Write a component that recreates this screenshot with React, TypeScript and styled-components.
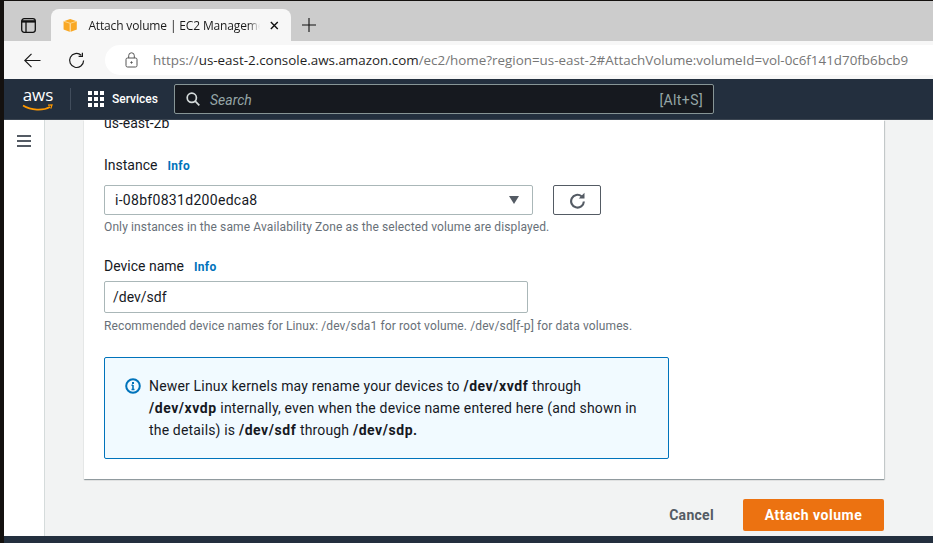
import React from 'react';
import styled, { createGlobalStyle } from 'styled-components';

const GlobalStyle = createGlobalStyle`
  html, body {
    margin: 0;
    padding: 0;
    height: 100%;
    overflow: hidden;
    background: #111;
  }
  * { box-sizing: border-box; }
`;

const Screen = styled.div`
  width: 933px;
  height: 543px;
  padding: 1px 0 0 4px;
  background: #14110f;
  display: flex;
  flex-direction: column;
  overflow: hidden;
  font-family: Roboto, "Noto Sans", sans-serif;
`;

const TabStrip = styled.div`
  height: 40px;
  flex: none;
  background: #cccccc;
  display: flex;
  align-items: flex-end;
  padding-left: 17px;
  color: #111;
`;

const SidebarIcon = styled.svg`
  width: 15px;
  height: 15px;
  margin-bottom: 8px;
  margin-right: 15px;
`;

const Tab = styled.div`
  width: 240px;
  height: 32px;
  background: #f7f7f7;
  border-radius: 8px 8px 0 0;
  display: flex;
  align-items: center;
  padding: 0 12px;
  margin-right: 11px;
`;

const TabTitle = styled.span`
  font-family: "Open Sans", sans-serif;
  font-size: 12px;
  letter-spacing: -0.15px;
  color: #1a1a1a;
  width: 172px;
  margin-left: 11px;
  margin-right: 10px;
  flex: none;
  white-space: nowrap;
  overflow: hidden;
  -webkit-mask-image: linear-gradient(to right, #000 160px, transparent 172px);
  mask-image: linear-gradient(to right, #000 160px, transparent 172px);
`;

const NewTabIcon = styled.svg`
  width: 14px;
  height: 14px;
  margin-bottom: 9px;
`;

const Toolbar = styled.div`
  height: 38px;
  flex: none;
  background: #f7f7f7;
  display: flex;
  align-items: center;
  padding-left: 20px;
`;

const ToolIcon = styled.svg<{ $gap: number }>`
  width: 17px;
  height: 17px;
  margin-right: ${(p) => p.$gap}px;
  flex: none;
`;

const AddressBar = styled.div`
  flex: 1;
  height: 30px;
  background: #ffffff;
  border-radius: 15px 0 0 15px;
  display: flex;
  align-items: center;
  padding-left: 20px;
  font-family: "Open Sans", sans-serif;
  font-size: 13.4px;
  color: #767676;
  white-space: nowrap;
`;

const Host = styled.span`
  color: #1f1f1f;
`;

const LockIcon = styled.svg`
  width: 13px;
  height: 16px;
  margin-right: 15px;
  flex: none;
`;

const NavBar = styled.div`
  height: 41px;
  flex: none;
  background: #232f3e;
  display: flex;
  align-items: center;
  padding-left: 18px;
  border-bottom: 1px solid #3c4652;
`;

const AwsLogo = styled.div`
  width: 32px;
  height: 28px;
  position: relative;
  color: #fff;
  font-family: "Open Sans", sans-serif;
  font-size: 17px;
  line-height: 20px;
  text-align: center;
  flex: none;
`;

const Swoosh = styled.svg`
  position: absolute;
  left: 0;
  bottom: 1px;
  width: 32px;
  height: 8px;
`;

const NavDivider = styled.div`
  width: 1px;
  height: 22px;
  background: #414d5c;
  margin: 0 17px 0 16px;
`;

const GridIcon = styled.svg`
  width: 16px;
  height: 16px;
  margin-right: 8px;
`;

const ServicesLabel = styled.span`
  color: #fff;
  font-size: 12px;
  font-weight: 500;
  width: 62px;
`;

const SearchBox = styled.div`
  width: 540px;
  height: 30px;
  background: #16191f;
  border: 1px solid #879596;
  border-radius: 2px;
  display: flex;
  align-items: center;
  padding: 0 10px 0 11px;
  color: #95a5a6;
  font-size: 14px;
`;

const SearchHint = styled.span`
  font-style: italic;
  margin: 2px 0 0 10px;
  flex: 1;
`;

const Shortcut = styled.span`
  margin-top: 2px;
  letter-spacing: 0.4px;
`;

const Body = styled.div`
  flex: 1;
  display: flex;
  min-height: 0;
  overflow: hidden;
`;

const SideNav = styled.div`
  width: 41px;
  flex: none;
  background: #ffffff;
  border-right: 1px solid #d5dbdb;
  padding: 15px 0 0 13px;
`;

const Burger = styled.svg`
  width: 14px;
  height: 12px;
  display: block;
`;

const Main = styled.div`
  flex: 1;
  background: #f2f3f3;
  padding-left: 39px;
  color: #16191f;
`;

const Card = styled.div`
  width: 800px;
  height: 359px;
  background: #ffffff;
  box-shadow: 0 1px 1px 0 rgba(0, 28, 36, 0.3), 1px 1px 1px 0 rgba(0, 28, 36, 0.15);
  padding: 0 20px;
  overflow: hidden;
`;

const ClippedValue = styled.div`
  font-size: 14px;
  line-height: 20px;
  margin-top: -7px;
  margin-bottom: 22px;
`;

const Label = styled.div<{ $gap: number }>`
  font-size: 14px;
  line-height: 20px;
  display: flex;
  align-items: baseline;
  margin-bottom: ${(p) => p.$gap}px;
`;

const InfoLink = styled.span`
  color: #0073bb;
  font-size: 12px;
  font-weight: 700;
  letter-spacing: 0.3px;
  margin-left: 10px;
`;

const FieldRow = styled.div`
  display: flex;
  gap: 20px;
`;

const SelectBox = styled.div`
  width: 429px;
  height: 30px;
  border: 1px solid #aab7b8;
  border-radius: 2px;
  display: flex;
  align-items: center;
  justify-content: space-between;
  padding: 0 13px 0 10px;
  font-size: 14px;
  letter-spacing: 0.3px;
  color: #16191f;
`;

const Caret = styled.div`
  width: 0;
  height: 0;
  border-left: 5px solid transparent;
  border-right: 5px solid transparent;
  border-top: 8px solid #545b64;
`;

const RefreshButton = styled.div`
  width: 48px;
  height: 30px;
  border: 1px solid #545b64;
  border-radius: 2px;
  display: flex;
  align-items: center;
  justify-content: center;
  background: #fff;
`;

const Hint = styled.div<{ $top: number }>`
  font-size: 12px;
  line-height: 16px;
  letter-spacing: 0.12px;
  color: #687078;
  margin-top: ${(p) => p.$top}px;
  white-space: nowrap;
`;

const Field = styled.div<{ $gap: number }>`
  margin-bottom: ${(p) => p.$gap}px;
`;

const TextInput = styled.div`
  width: 424px;
  height: 32px;
  border: 1px solid #aab7b8;
  border-radius: 2px;
  display: flex;
  align-items: center;
  padding-left: 8px;
  font-size: 14px;
`;

const Alert = styled.div`
  width: 565px;
  height: 102px;
  background: #f1faff;
  border: 1px solid #0073bb;
  border-radius: 2px;
  padding: 17px 0 0 20px;
  display: flex;
  gap: 8px;
  font-size: 14px;
  line-height: 22px;
  letter-spacing: 0.17px;
`;

const AlertText = styled.div`
  width: 498px;
`;

const Strong = styled.b`
  letter-spacing: 0.55px;
`;

const AlertIcon = styled.svg`
  width: 16px;
  height: 16px;
  flex: none;
  margin-top: 3px;
`;

const Footer = styled.div`
  width: 801px;
  display: flex;
  justify-content: flex-end;
  align-items: center;
  margin-top: 20px;
`;

const CancelButton = styled.span`
  font-size: 14px;
  font-weight: 700;
  letter-spacing: 0.3px;
  color: #545b64;
  margin-right: 29px;
`;

const PrimaryButton = styled.div`
  width: 141px;
  height: 32px;
  background: #ec7211;
  border-radius: 2px;
  color: #fff;
  font-size: 14px;
  font-weight: 700;
  letter-spacing: 0.5px;
  display: flex;
  align-items: center;
  justify-content: center;
  margin-right: 1px;
`;

const BottomBar = styled.div`
  height: 7px;
  flex: none;
  background: #232f3e;
`;

const App = () => {
  return (
    <Screen>
      <GlobalStyle />
      <TabStrip>
        <SidebarIcon viewBox="0 0 15 15" fill="none" stroke="#111" strokeWidth="1.3">
          <rect x="0.7" y="0.7" width="13.6" height="13.6" rx="2.5" />
          <path d="M0.7 3.4h13.6" strokeWidth="2.4" />
          <path d="M5 4v10" />
        </SidebarIcon>
        <Tab>
          <svg width="15" height="15" viewBox="0 0 15 15">
            <path d="M7.5 0.8 14.4 3v8.8L7.5 14.4.6 11.8V3z" fill="#f9a825" />
            <path d="M7.5 5.2V14.4" stroke="#fff" strokeWidth="0.8" />
            <path d="M.6 3l6.9 2.2L14.4 3" stroke="#fde3a7" strokeWidth="0.8" fill="none" />
          </svg>
          <TabTitle>Attach volume | EC2 Management Console</TabTitle>
          <svg width="9" height="9" viewBox="0 0 10 10" stroke="#111" strokeWidth="1.6">
            <path d="M1 1l8 8M9 1l-8 8" />
          </svg>
        </Tab>
        <NewTabIcon viewBox="0 0 14 14" stroke="#111" strokeWidth="1.1">
          <path d="M7 0v14M0 7h14" />
        </NewTabIcon>
      </TabStrip>
      <Toolbar>
        <ToolIcon $gap={27} viewBox="0 0 17 17" fill="none" stroke="#1a1a1a" strokeWidth="1.2">
          <path d="M16.5 8.5H.8M7.5 1.8.8 8.5l6.7 6.7" />
        </ToolIcon>
        <ToolIcon $gap={20} viewBox="0 0 17 17" fill="none" stroke="#1a1a1a" strokeWidth="1.2">
          <path d="M15.6 8.5a7 7 0 1 1-2.4-5.3" />
          <path d="M14.4.8v3.6h-3.8" />
        </ToolIcon>
        <AddressBar>
          <LockIcon viewBox="0 0 13 16" fill="none" stroke="#555" strokeWidth="1">
            <rect x="1" y="6" width="11" height="9" rx="1.5" />
            <path d="M3.7 6V3.6a2.8 2.8 0 0 1 5.6 0V6" />
            <circle cx="6.5" cy="10.5" r="0.7" fill="#555" />
          </LockIcon>
          <span>
            https://<Host>us-east-2.console.aws.amazon.com</Host>/ec2/home?region=us-east-2#AttachVolume:volumeId=vol-0c6f141d70fb6bcb9
          </span>
        </AddressBar>
      </Toolbar>
      <NavBar>
        <AwsLogo>
          aws
          <Swoosh viewBox="0 0 32 8" fill="none">
            <path d="M1 1.5C9 6.5 21 7 28 3" stroke="#ff9900" strokeWidth="1.6" />
            <path d="M26 1.2l4-.2-1.2 3.6" stroke="#ff9900" strokeWidth="1.2" />
          </Swoosh>
        </AwsLogo>
        <NavDivider />
        <GridIcon viewBox="0 0 16 16" fill="#fff">
          {[0, 6, 12].flatMap((y) =>
            [0, 6, 12].map((x) => <rect key={`${x}-${y}`} x={x} y={y} width="4" height="4" />)
          )}
        </GridIcon>
        <ServicesLabel>Services</ServicesLabel>
        <SearchBox>
          <svg width="14" height="14" viewBox="0 0 14 14" fill="none" stroke="#d5dbdb" strokeWidth="1.7">
            <circle cx="5.8" cy="5.8" r="4.6" />
            <path d="M9.2 9.2 13.3 13.3" />
          </svg>
          <SearchHint>Search</SearchHint>
          <Shortcut>[Alt+S]</Shortcut>
        </SearchBox>
      </NavBar>
      <Body>
        <SideNav>
          <Burger viewBox="0 0 14 12" fill="#545b64">
            <rect y="0" width="14" height="2" />
            <rect y="5" width="14" height="2" />
            <rect y="10" width="14" height="2" />
          </Burger>
        </SideNav>
        <Main>
          <Card>
            <ClippedValue>us-east-2b</ClippedValue>
            <Field $gap={21}>
              <Label $gap={9}>
                Instance <InfoLink>Info</InfoLink>
              </Label>
              <FieldRow>
                <SelectBox>
                  i-08bf0831d200edca8
                  <Caret />
                </SelectBox>
                <RefreshButton>
                  <svg width="17" height="17" viewBox="0 0 16 16" fill="none" stroke="#545b64" strokeWidth="2">
                    <path d="M14 9a6 6 0 1 1-2.2-5" />
                    <path d="M14.6 .8v5.4H9.2z" fill="#545b64" stroke="none" />
                  </svg>
                </RefreshButton>
              </FieldRow>
              <Hint $top={4}>Only instances in the same Availability Zone as the selected volume are displayed.</Hint>
            </Field>
            <Field $gap={23}>
              <Label $gap={4}>
                Device name <InfoLink>Info</InfoLink>
              </Label>
              <TextInput>/dev/sdf</TextInput>
              <Hint $top={5}>Recommended device names for Linux: /dev/sda1 for root volume. /dev/sd[f-p] for data volumes.</Hint>
            </Field>
            <Alert>
              <AlertIcon viewBox="0 0 16 16" fill="none">
                <circle cx="8" cy="8" r="6.8" stroke="#0073bb" strokeWidth="2" />
                <path d="M8 7v4.5M6.5 11.5h3M6.5 7.2H8" stroke="#0073bb" strokeWidth="1.6" />
                <rect x="7" y="4" width="2" height="2" fill="#0073bb" />
              </AlertIcon>
              <AlertText>
                Newer Linux kernels may rename your devices to <Strong>/dev/xvdf</Strong> through{' '}
                <Strong>/dev/xvdp</Strong> internally, even when the device name entered here (and shown in the details)
                is <Strong>/dev/sdf</Strong> through <Strong>/dev/sdp.</Strong>
              </AlertText>
            </Alert>
          </Card>
          <Footer>
            <CancelButton>Cancel</CancelButton>
            <PrimaryButton>Attach volume</PrimaryButton>
          </Footer>
        </Main>
      </Body>
      <BottomBar />
    </Screen>
  );
};

export default App;
